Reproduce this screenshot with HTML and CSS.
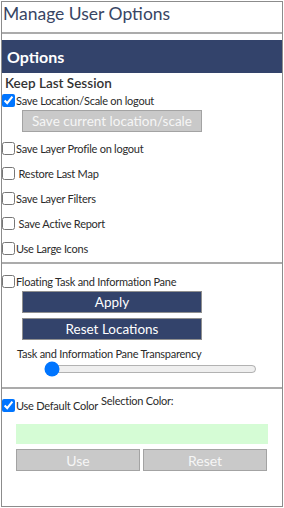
FILE: index.html
```html
<!DOCTYPE html>
<html lang="en">
<head>
  <meta charset="UTF-8" />
  <title>Manage User Options</title>
  <link rel="stylesheet" href="styles.css">
</head>
<body>
  <div class="panel">
    <h1 class="title">Manage User Options</h1>
    <hr class="rule top-rule" />

    <div class="section-bar">Options</div>
    <h3 class="sub">Keep Last Session</h3>

    <label class="opt opt-first"><input type="checkbox" checked />Save Location/Scale on logout</label>
    <button class="btn btn-off btn-wide btn-save">Save current location/scale</button>

    <label class="opt"><input type="checkbox" />Save Layer Profile on logout</label>
    <label class="opt"><input type="checkbox" />&nbsp;Restore Last Map</label>
    <label class="opt"><input type="checkbox" />Save Layer Filters</label>
    <label class="opt"><input type="checkbox" />&nbsp;Save Active Report</label>
    <label class="opt"><input type="checkbox" />Use Large Icons</label>

    <hr class="rule mid-rule" />

    <label class="opt opt-float"><input type="checkbox" />Floating Task and Information Pane</label>
    <button class="btn btn-on btn-wide btn-apply">Apply</button>
    <button class="btn btn-on btn-wide btn-reset">Reset Locations</button>

    <div class="range-label">Task and Information Pane Transparency</div>
    <input class="range" type="range" min="0" max="100" value="0" />

    <hr class="rule low-rule" />

    <div class="color-row">
      <label class="opt"><input type="checkbox" checked />Use Default Color</label>
      <span class="sel-label">Selection Color:</span>
    </div>
    <div class="swatch"></div>
    <div class="pair">
      <button class="btn btn-off">Use</button>
      <button class="btn btn-off">Reset</button>
    </div>
  </div>
</body>
</html>
```

FILE: styles.css
```css
body { margin: 0; font-family: Lato, "Open Sans", sans-serif; background: #fff; }
.panel { margin: 1px 0 0 1px; width: 280px; height: 504px; border: 1px solid #8c8c8c; }

.title { font-size: 17.5px; font-weight: normal; color: #384564; margin: 1px 0 0 1px; line-height: 22px; height: 22px; }
.rule { border: 0; border-top: 2px solid #ababab; margin: 0; }
.top-rule { margin: 7px 0 6px 0; }
.mid-rule { margin-top: 1px; }
.low-rule { margin-top: 10px; }

.section-bar { background: #33436b; color: #fff; font-size: 16px; font-weight: bold; height: 33px; line-height: 34px; padding-left: 5px; }
.sub { font-size: 13.5px; font-weight: 600; color: #333; margin: 1px 0 0 3px; line-height: 19px; height: 19px; }

.opt { display: flex; align-items: center; height: 25px; font-size: 11px; letter-spacing: -0.25px; color: #2b2b2b; }
.opt input { margin: 0 1px 0 0; width: 13px; height: 13px; flex: none; }
.opt-first { height: 14px; }
.opt-float { height: 18px; margin-top: 8px; }

.btn { font-family: inherit; border: 1px solid #8f8f8f; padding: 0; cursor: pointer; }
.btn-wide { display: block; width: 180px; height: 22px; margin-left: 20px; font-size: 13.5px; }
.btn-off { background: #c9c9c9; color: #f6f6f6; border-color: #a3a3a3; }
.btn-on { background: #33436b; color: #fff; }
.btn-save { margin-top: 3px; margin-bottom: 4px; }
.btn-apply { margin-top: 1px; }
.btn-reset { margin-top: 5px; }

.range-label { font-size: 11px; letter-spacing: -0.25px; color: #2b2b2b; margin: 7px 0 0 15px; line-height: 14px; }
.range { display: block; width: 213px; height: 16px; margin: 0 0 0 42px; }

.color-row { display: flex; align-items: flex-start; margin-top: 9px; }
.color-row .opt { height: 14px; }
.sel-label { font-size: 11px; letter-spacing: -0.25px; color: #2b2b2b; margin-left: 3px; margin-top: -4px; }

.swatch { background: #d5fcd5; height: 20px; width: 252px; margin: 12px 0 5px 14px; }
.pair { display: flex; gap: 3px; margin-left: 14px; }
.pair .btn { width: 124px; height: 22px; font-size: 14px; }
```
